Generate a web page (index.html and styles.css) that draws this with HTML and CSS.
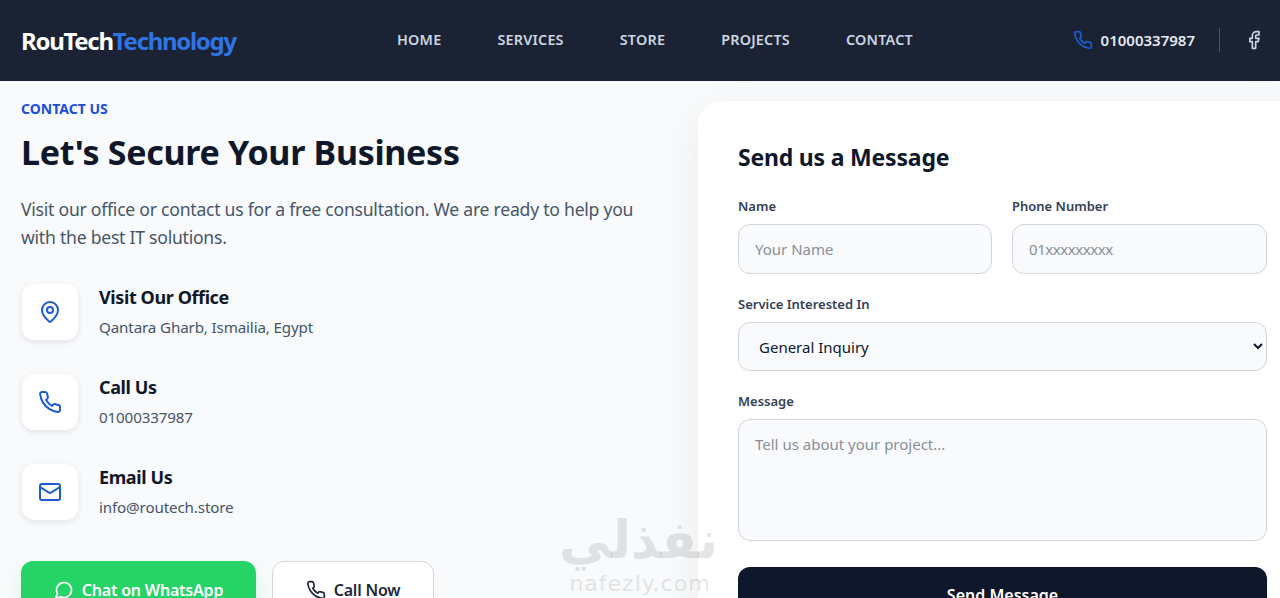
FILE: index.html
```html
<!DOCTYPE html>
<html lang="en">
<head>
  <meta charset="UTF-8">
  <title>RouTech Technology - Contact</title>
  <link rel="stylesheet" href="styles.css">
</head>
<body>

<svg class="sprite" aria-hidden="true">
  <symbol id="i-phone" viewBox="0 0 24 24"><path d="M22 16.92v3a2 2 0 0 1-2.18 2 19.79 19.79 0 0 1-8.63-3.07 19.5 19.5 0 0 1-6-6 19.79 19.79 0 0 1-3.07-8.67A2 2 0 0 1 4.11 2h3a2 2 0 0 1 2 1.72 12.84 12.84 0 0 0 .7 2.81 2 2 0 0 1-.45 2.11L8.09 9.91a16 16 0 0 0 6 6l1.27-1.27a2 2 0 0 1 2.11-.45 12.84 12.84 0 0 0 2.81.7A2 2 0 0 1 22 16.92z"/></symbol>
  <symbol id="i-pin" viewBox="0 0 24 24"><path d="M20 10c0 4.993-5.539 10.193-7.399 11.799a1 1 0 0 1-1.202 0C9.539 20.193 4 14.993 4 10a8 8 0 0 1 16 0"/><circle cx="12" cy="10" r="3"/></symbol>
  <symbol id="i-mail" viewBox="0 0 24 24"><rect x="2" y="4" width="20" height="16" rx="2"/><path d="m22 7-8.97 5.7a1.94 1.94 0 0 1-2.06 0L2 7"/></symbol>
  <symbol id="i-facebook" viewBox="0 0 24 24"><path d="M18 2h-3a5 5 0 0 0-5 5v3H7v4h3v8h4v-8h3l1-4h-4V7a1 1 0 0 1 1-1h3z"/></symbol>
  <symbol id="i-chat" viewBox="0 0 24 24"><path d="M7.9 20A9 9 0 1 0 4 16.1L2 22Z"/></symbol>
</svg>

<header class="topbar">
  <a class="logo" href="#">RouTech<span>Technology</span></a>
  <nav class="nav">
    <a href="#">HOME</a>
    <a href="#">SERVICES</a>
    <a href="#">STORE</a>
    <a href="#">PROJECTS</a>
    <a href="#">CONTACT</a>
  </nav>
  <div class="topbar-right">
    <a class="top-phone" href="#">
      <svg class="icon icon-blue"><use href="#i-phone"/></svg>
      01000337987
    </a>
    <span class="divider"></span>
    <a class="top-social" href="#"><svg class="icon"><use href="#i-facebook"/></svg></a>
  </div>
</header>

<main class="contact">
  <section class="info">
    <div class="eyebrow">CONTACT US</div>
    <h1>Let's Secure Your Business</h1>
    <p class="lead">Visit our office or contact us for a free consultation. We are ready to help you with the best IT solutions.</p>

    <div class="info-item">
      <div class="info-icon"><svg class="icon"><use href="#i-pin"/></svg></div>
      <div class="info-text">
        <h3>Visit Our Office</h3>
        <p>Qantara Gharb, Ismailia, Egypt</p>
      </div>
    </div>
    <div class="info-item">
      <div class="info-icon"><svg class="icon"><use href="#i-phone"/></svg></div>
      <div class="info-text">
        <h3>Call Us</h3>
        <p>01000337987</p>
      </div>
    </div>
    <div class="info-item">
      <div class="info-icon"><svg class="icon"><use href="#i-mail"/></svg></div>
      <div class="info-text">
        <h3>Email Us</h3>
        <p>info@routech.store</p>
      </div>
    </div>

    <div class="actions">
      <a class="btn btn-whatsapp" href="#"><svg class="icon"><use href="#i-chat"/></svg>Chat on WhatsApp</a>
      <a class="btn btn-call" href="#"><svg class="icon"><use href="#i-phone"/></svg>Call Now</a>
    </div>
  </section>

  <section class="form-card">
    <h2>Send us a Message</h2>
    <form>
      <div class="form-row">
        <div class="field">
          <label for="name">Name</label>
          <input type="text" id="name" placeholder="Your Name">
        </div>
        <div class="field">
          <label for="phone">Phone Number</label>
          <input type="text" id="phone" placeholder="01xxxxxxxxx">
        </div>
      </div>
      <div class="field">
        <label for="service">Service Interested In</label>
        <select id="service">
          <option>General Inquiry</option>
        </select>
      </div>
      <div class="field">
        <label for="message">Message</label>
        <textarea id="message" placeholder="Tell us about your project..."></textarea>
      </div>
      <button type="button" class="send">Send Message</button>
    </form>
  </section>
</main>

<div class="watermark">
  <div class="wm-ar" lang="ar" dir="rtl">نفذلي</div>
  <div class="wm-en">nafezly.com</div>
</div>

</body>
</html>
```

FILE: styles.css
```css
* {
  box-sizing: border-box;
}

html, body {
  height: 598px;
  overflow: hidden;
}

body {
  margin: 0;
  font-family: "Noto Sans", sans-serif;
  background: #f8fafc;
  color: #0f172a;
}

a {
  text-decoration: none;
}

.sprite {
  display: none;
}

.icon {
  width: 20px;
  height: 20px;
  fill: none;
  stroke: currentColor;
  stroke-width: 2;
  stroke-linecap: round;
  stroke-linejoin: round;
  flex-shrink: 0;
}

.icon-blue {
  color: #1d5bd0;
}

/* top bar */
.topbar {
  height: 81px;
  background: #1b2233;
  display: flex;
  align-items: center;
  padding: 0 16px 0 21px;
}

.logo {
  width: 215px;
  font-size: 24px;
  font-weight: 700;
  letter-spacing: -1.3px;
  color: #fff;
}

.logo span {
  color: #2f74e4;
}

.nav {
  display: flex;
  gap: 56px;
  margin-left: 161px;
  margin-top: -2px;
}

.nav a {
  font-size: 14.4px;
  letter-spacing: 0.2px;
  font-weight: 600;
  color: #cbd5e1;
}

.topbar-right {
  margin-left: auto;
  display: flex;
  align-items: center;
  margin-top: -2px;
}

.top-phone {
  display: flex;
  align-items: center;
  gap: 8px;
  font-size: 15px;
  font-weight: 600;
  color: #e2e8f0;
}

.divider {
  width: 1px;
  height: 24px;
  background: #475569;
  margin: 0 24px;
}

.top-social {
  display: flex;
  color: #cbd5e1;
}

/* contact section */
.contact {
  display: grid;
  grid-template-columns: 677px 609px;
  padding: 20px 0 0 21px;
}

.eyebrow {
  font-size: 14px;
  font-weight: 700;
  color: #1d4ed8;
  line-height: 16px;
}

.info h1 {
  margin: 13px 0 0;
  font-size: 34px;
  letter-spacing: -0.3px;
  line-height: 44px;
  font-weight: 700;
}

.lead {
  margin: 21px 0 33px;
  width: 630px;
  font-size: 17.6px;
  letter-spacing: -0.25px;
  line-height: 28px;
  color: #475569;
}

.info-item {
  display: flex;
  gap: 21px;
  height: 56px;
  margin-bottom: 34px;
  padding-left: 1px;
}

.info-icon {
  width: 56px;
  height: 56px;
  border-radius: 12px;
  background: #fff;
  box-shadow: 0 2px 6px rgba(15, 23, 42, 0.1);
  display: flex;
  align-items: center;
  justify-content: center;
  color: #1d5bd0;
}

.info-icon .icon {
  width: 24px;
  height: 24px;
}

.info-text {
  margin-top: -1px;
}

.info-item h3 {
  margin: 0;
  font-size: 18px;
  letter-spacing: -0.4px;
  line-height: 28px;
  font-weight: 700;
}

.info-item p {
  margin: 2px 0 0;
  font-size: 15.2px;
  letter-spacing: -0.15px;
  line-height: 28px;
  color: #475569;
}

.actions {
  display: flex;
  gap: 16px;
  margin-top: 41px;
}

.btn {
  display: flex;
  align-items: center;
  gap: 8px;
  height: 56px;
  border-radius: 12px;
  font-size: 16px;
  letter-spacing: -0.2px;
  font-weight: 600;
  padding-top: 2px;
}

.btn-whatsapp {
  width: 235px;
  justify-content: center;
  background: #25d366;
  color: #fff;
  box-shadow: 0 8px 16px rgba(37, 211, 102, 0.15);
}

.btn-call {
  width: 162px;
  justify-content: center;
  background: #fff;
  border: 1px solid #d1d5db;
  color: #1e293b;
}

/* form card */
.form-card {
  height: 560px;
  background: #fff;
  border-radius: 24px;
  padding: 40px;
  box-shadow: 0 10px 40px rgba(15, 23, 42, 0.06);
}

.form-card h2 {
  margin: 0 0 23px;
  font-size: 23px;
  letter-spacing: -0.2px;
  line-height: 32px;
  font-weight: 700;
}

.form-row {
  display: grid;
  grid-template-columns: 254px 255px;
  gap: 20px;
}

.field {
  margin-bottom: 20px;
}

.field label {
  display: block;
  margin-bottom: 8px;
  font-size: 13px;
  line-height: 20px;
  font-weight: 600;
  color: #334155;
}

.field input,
.field select,
.field textarea {
  display: block;
  width: 100%;
  border: 1px solid #d1d5db;
  border-radius: 12px;
  background: #f8fafc;
  font-family: inherit;
  font-size: 15px;
  color: #0f172a;
}

.field input {
  height: 50px;
  padding: 0 16px;
}

.form-card form > .field {
  width: 529px;
}

.field select {
  height: 49px;
  padding: 0 16px;
}

.field textarea {
  height: 122px;
  padding: 14px 16px;
  resize: none;
}

.field input::placeholder,
.field textarea::placeholder {
  color: #8a8f98;
}

#phone::placeholder {
  letter-spacing: -0.45px;
}

.send {
  display: block;
  width: 529px;
  height: 56px;
  margin-top: 26px;
  border: none;
  border-radius: 12px;
  background: #0f172a;
  color: #fff;
  font-family: inherit;
  font-size: 16px;
  font-weight: 600;
}

/* watermark over the page */
.watermark {
  position: absolute;
  left: 562px;
  top: 510px;
  width: 156px;
  text-align: center;
  color: rgba(100, 100, 100, 0.17);
  pointer-events: none;
}

.wm-ar {
  font-family: "DejaVu Sans", sans-serif;
  font-size: 52px;
  line-height: 60px;
  font-weight: 700;
}

.wm-en {
  font-family: "DejaVu Sans", sans-serif;
  font-size: 22px;
  line-height: 28px;
  letter-spacing: 1px;
}
```
